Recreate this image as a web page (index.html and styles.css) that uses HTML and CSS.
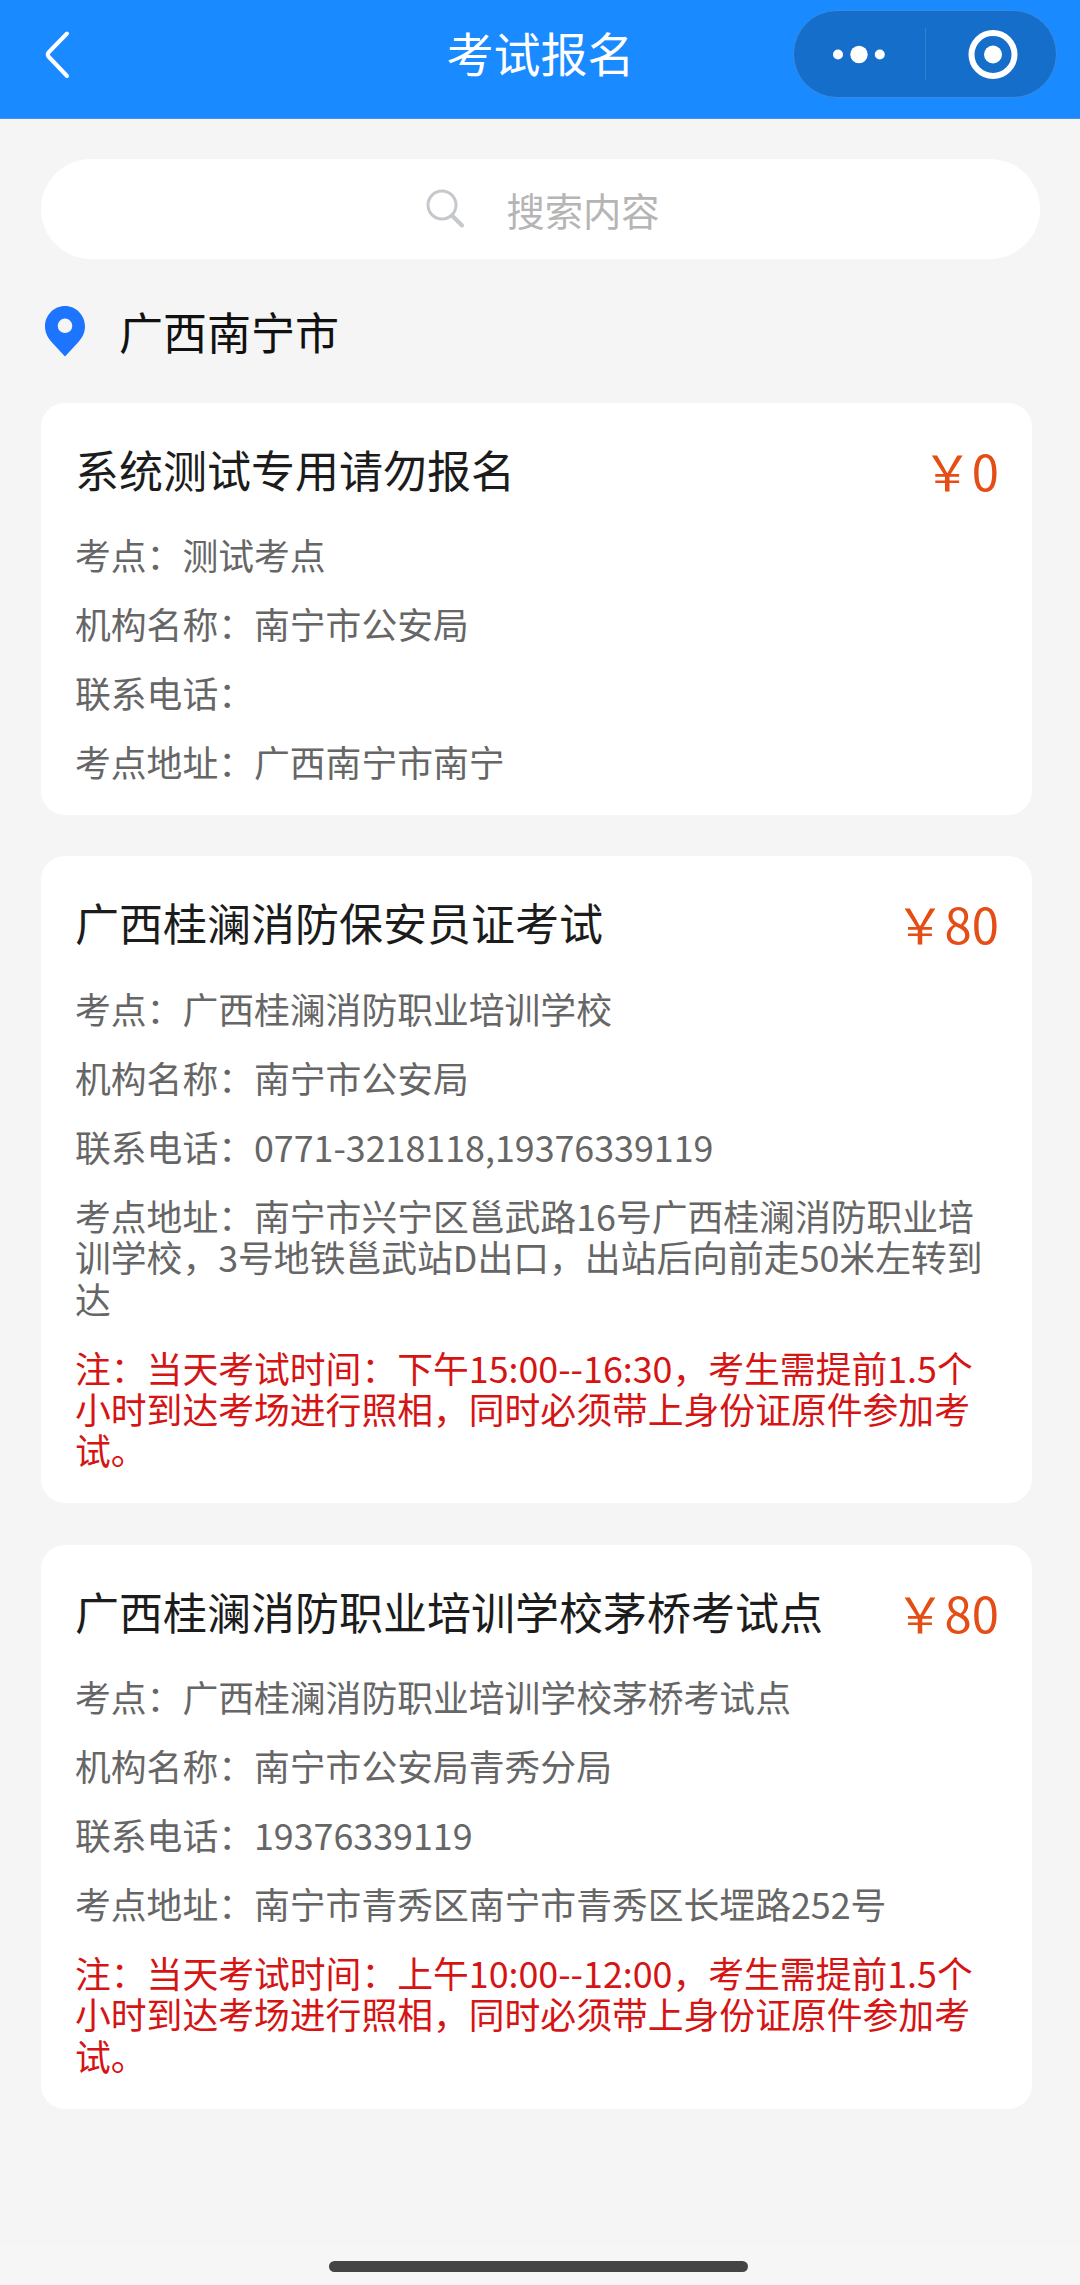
FILE: index.html
```html
<!DOCTYPE html>
<html lang="zh-CN">
<head>
<meta charset="utf-8">
<title>考试报名</title>
<link rel="stylesheet" href="styles.css">
</head>
<body>
<header class="navbar">
  <svg class="back" width="28" height="52" viewBox="0 0 28 52" fill="none" stroke="#fff" stroke-width="4" stroke-linecap="round" stroke-linejoin="round"><path d="M23 5.500 4.500 24.500Q3 26.500 4.500 28.500L23 48"/></svg>
  <h1 class="navbar-title">考试报名</h1>
  <div class="capsule">
    <svg class="capsule-icon" width="131" height="86" viewBox="0 0 131 86" fill="#fff"><circle cx="44" cy="43.500" r="5"/><circle cx="65" cy="43.500" r="8.700"/><circle cx="85.800" cy="43.500" r="5"/></svg>
    <span class="capsule-divider"></span>
    <svg class="capsule-icon" width="130" height="86" viewBox="0 0 130 86" fill="#fff"><circle cx="67" cy="43.500" r="21.500" fill="none" stroke="#fff" stroke-width="6"/><circle cx="67" cy="43.500" r="9"/></svg>
  </div>
</header>
<main class="content">
  <div class="search">
    <svg width="40" height="40" viewBox="0 0 40 40" fill="none" stroke="#c5c8cc"><circle cx="16" cy="16" r="14" stroke-width="3"/><path d="M26 26.500 36 36.500" stroke-width="4" stroke-linecap="round"/></svg>
    <span class="search-text">搜索内容</span>
  </div>
  <div class="location">
    <svg width="40" height="51" viewBox="0 0 40 51" fill="#1c74ff"><path fill-rule="evenodd" d="M20 0C31 0 40 9 40 20.500C40 27 37 32 33 36.500L20 50.500L7 36.500C3 32 0 27 0 20.500C0 9 9 0 20 0ZM20 12.500a7.300 7.300 0 1 0 0 14.600a7.300 7.300 0 1 0 0-14.600Z"/></svg>
    <span>广西南宁市</span>
  </div>
  <div class="cards">
    <section class="card">
      <div class="card-head"><h2>系统测试专用请勿报名</h2><div class="price">￥0</div></div>
      <p>考点：测试考点</p>
      <p>机构名称：南宁市公安局</p>
      <p>联系电话：</p>
      <p>考点地址：广西南宁市南宁</p>
    </section>
    <section class="card">
      <div class="card-head"><h2>广西桂澜消防保安员证考试</h2><div class="price">￥80</div></div>
      <p>考点：广西桂澜消防职业培训学校</p>
      <p>机构名称：南宁市公安局</p>
      <p>联系电话：0771-3218118,19376339119</p>
      <p>考点地址：南宁市兴宁区邕武路16号广西桂澜消防职业培训学校，3号地铁邕武站D出口，出站后向前走50米左转到达</p>
      <p class="note">注：当天考试时间：下午15:00--16:30，考生需提前1.5个小时到达考场进行照相，同时必须带上身份证原件参加考试。</p>
    </section>
    <section class="card">
      <div class="card-head"><h2>广西桂澜消防职业培训学校茅桥考试点</h2><div class="price">￥80</div></div>
      <p>考点：广西桂澜消防职业培训学校茅桥考试点</p>
      <p>机构名称：南宁市公安局青秀分局</p>
      <p>联系电话：19376339119</p>
      <p>考点地址：南宁市青秀区南宁市青秀区长堽路252号</p>
      <p class="note">注：当天考试时间：上午10:00--12:00，考生需提前1.5个小时到达考场进行照相，同时必须带上身份证原件参加考试。</p>
    </section>
  </div>
</main>
<footer class="home-area"><span class="home-bar"></span></footer>
</body>
</html>
```
FILE: styles.css
```css
* { box-sizing: border-box; }
body {
  margin: 0;
  height: 2285px;
  display: flex;
  flex-direction: column;
  background: #f5f5f5;
  font-family: "Noto Sans CJK SC", sans-serif;
  color: #1a1a1a;
}
h1, h2, p { margin: 0; font-weight: 400; }
svg { display: block; flex: none; }
.navbar {
  height: 119px;
  padding: 10px 23px 0 44px;
  display: grid;
  grid-template-columns: 264px 1fr 264px;
  align-items: start;
  background: #198aff;
  border-bottom: 1px solid #4a90dc;
}
.back { margin-top: 18px; }
.navbar-title {
  font-size: 47px;
  line-height: 84px;
  text-align: center;
  color: #fff;
  padding-right: 20px;
}
.capsule {
  display: flex;
  align-items: center;
  height: 88px;
  border: 1px solid #3a8ae0;
  border-radius: 44px;
  background: #156ec9;
}
.capsule-divider { width: 1px; height: 52px; background: #3582d2; }
.content { flex: 1; padding: 40px 40px 0 41px; }
.search {
  height: 100px;
  border-radius: 50px;
  background: #fff;
  display: flex;
  align-items: center;
  justify-content: center;
  gap: 40px;
  padding-left: 5px;
  font-size: 38.3px;
  color: #b5b5b5;
}
.search-text { line-height: 60px; padding-top: 2px; }
.location {
  height: 143.500px;
  display: flex;
  align-items: center;
  gap: 34px;
  padding: 1px 0 0 4px;
  font-size: 44px;
  color: #111;
}
.location span { line-height: 60px; }
.cards { display: flex; flex-direction: column; gap: 41.500px; margin-right: 8px; }
.card {
  padding: 30px 33px 32.500px 34px;
  border-radius: 24px;
  background: #fff;
  display: flex;
  flex-direction: column;
  gap: 27.700px;
  font-size: 35.8px;
  line-height: 41.300px;
  color: #666;
}
.card-head {
  height: 74px;
  display: flex;
  justify-content: space-between;
  align-items: flex-start;
  line-height: 72px;
}
.card h2 { font-size: 44px; color: #1c1c1c; }
.price { font-size: 49px; line-height: 74px; color: #e54d16; }
.card .note { color: #d51414; }
.home-area {
  height: 42px;
  padding-top: 18px;
  display: flex;
  justify-content: center;
  background: #f6f6f6;
}
.home-bar { width: 419px; height: 11px; margin-right: 4px; border-radius: 6px; background: #444; }
```
